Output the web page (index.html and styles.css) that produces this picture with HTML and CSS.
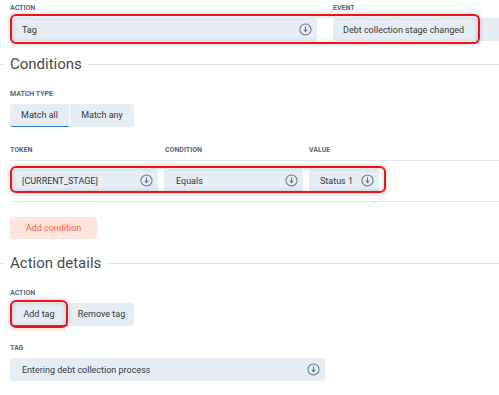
FILE: index.html
```html
<!DOCTYPE html>
<html lang="en">
<head>
  <meta charset="UTF-8">
  <title>Automation rule</title>
  <link rel="stylesheet" href="styles.css">
</head>
<body>
<div class="page">

  <!-- Trigger -->
  <div class="row trigger">
    <div class="col">
      <div class="label">Action</div>
      <div class="select w-action">
        <span>Tag</span>
        <svg class="caret" viewBox="0 0 14 14"><circle cx="7" cy="7" r="6"/><path d="M7 3.5V8.5"/><path class="head" d="M4.6 7.4H9.4L7 10.2Z"/></svg>
      </div>
    </div>
    <div class="col">
      <div class="label">Event</div>
      <div class="select w-event"><span>Debt collection stage changed</span></div>
    </div>
    <div class="mark mark-trigger"></div>
  </div>

  <!-- Conditions -->
  <div class="legend"><span class="legend-stub"></span><h2>Conditions</h2><span class="legend-line"></span></div>

  <div class="label">Match type</div>
  <div class="toggle">
    <div class="toggle-opt active w-all">Match all</div>
    <div class="toggle-opt w-any">Match any</div>
  </div>

  <div class="cond-table">
    <div class="cond-head">
      <div class="label">Token</div>
      <div class="label">Condition</div>
      <div class="label">Value</div>
    </div>
    <div class="cond-row">
      <div class="select">
        <span>[CURRENT_STAGE]</span>
        <svg class="caret" viewBox="0 0 14 14"><circle cx="7" cy="7" r="6"/><path d="M7 3.5V8.5"/><path class="head" d="M4.6 7.4H9.4L7 10.2Z"/></svg>
      </div>
      <div class="select">
        <span>Equals</span>
        <svg class="caret" viewBox="0 0 14 14"><circle cx="7" cy="7" r="6"/><path d="M7 3.5V8.5"/><path class="head" d="M4.6 7.4H9.4L7 10.2Z"/></svg>
      </div>
      <div class="select">
        <span>Status 1</span>
        <svg class="caret" viewBox="0 0 14 14"><circle cx="7" cy="7" r="6"/><path d="M7 3.5V8.5"/><path class="head" d="M4.6 7.4H9.4L7 10.2Z"/></svg>
      </div>
      <div class="mark mark-cond"></div>
    </div>
  </div>

  <button class="btn-add">Add condition</button>

  <!-- Action details -->
  <div class="legend"><span class="legend-stub"></span><h2>Action details</h2><span class="legend-line"></span></div>

  <div class="label">Action</div>
  <div class="toggle toggle-tag">
    <div class="toggle-opt active w-addtag">Add tag</div>
    <div class="toggle-opt w-remtag">Remove tag</div>
    <div class="mark mark-tag"></div>
  </div>

  <div class="label">Tag</div>
  <div class="select w-tag">
    <span>Entering debt collection process</span>
    <svg class="caret" viewBox="0 0 14 14"><circle cx="7" cy="7" r="6"/><path d="M7 3.5V8.5"/><path class="head" d="M4.6 7.4H9.4L7 10.2Z"/></svg>
  </div>

</div>
</body>
</html>
```

FILE: styles.css
```css
body {
  margin: 0;
  font-family: Roboto, "Noto Sans", sans-serif;
  color: #3d4650;
  background: #fff;
}
.page {
  padding: 3px 0 0 10px;
  width: 489px;
  height: 392px;
  overflow: hidden;
}
.label {
  font-size: 7px;
  line-height: 10px;
  font-weight: 700;
  text-transform: uppercase;
  color: #566a7e;
  margin-bottom: 5px;
}
.row {
  display: flex;
  position: relative;
}
.col {
  flex-shrink: 0;
}
.trigger .col + .col {
  margin-left: 16px;
}
.select {
  display: flex;
  align-items: center;
  justify-content: space-between;
  height: 23px;
  padding: 0 5px 0 12px;
  box-sizing: border-box;
  background: #e6edf5;
  border-radius: 3px;
  font-size: 9px;
  color: #33393f;
}
.caret {
  width: 13px;
  height: 13px;
  fill: none;
  stroke: #627689;
  stroke-width: 1.1;
}
.caret .head {
  fill: #627689;
  stroke: none;
}
.w-action { width: 307px; }
.w-event { width: 200px; padding-left: 10px; }
.w-tag { width: 315px; }

.mark {
  position: absolute;
  border: 2px solid #f0121b;
  border-radius: 6px;
  box-shadow: 0 0 5px rgba(0, 0, 0, 0.22), inset 0 0 5px rgba(0, 0, 0, 0.18);
  pointer-events: none;
}
.mark-trigger {
  left: 0;
  top: 11px;
  width: 466px;
  height: 26px;
}

.legend {
  display: flex;
  align-items: center;
  margin: 15px 0 0 -10px;
  height: 16px;
}
.legend-stub {
  width: 3px;
  border-top: 1px solid #d7e1eb;
}
.legend h2 {
  margin: 0 7px;
  font-size: 15px;
  font-weight: 400;
  line-height: 16px;
  color: #474b50;
}
.legend-line {
  flex: 1;
  border-top: 1px solid #d7e1eb;
}
.legend + .label {
  margin-top: 17px;
}

.toggle {
  display: flex;
  gap: 1px;
  position: relative;
  width: max-content;
}
.toggle-opt {
  height: 23px;
  line-height: 23px;
  box-sizing: border-box;
  text-align: center;
  background: #e6edf5;
  font-size: 9px;
  color: #33393f;
}
.toggle-opt:first-child { border-radius: 3px 0 0 3px; }
.toggle-opt:nth-child(2) { border-radius: 0 3px 3px 0; }
.toggle-opt.active {
  border-bottom: 1px solid #2c7cc0;
}
.w-all { width: 59px; }
.w-any { width: 64px; }
.w-addtag { width: 58px; }
.w-remtag { width: 65px; }
.mark-tag {
  left: 0;
  top: -3px;
  width: 54px;
  height: 24px;
}

.cond-table {
  margin-top: 18px;
}
.cond-head,
.cond-row {
  display: grid;
  grid-template-columns: 148px 139px 70px;
  column-gap: 6px;
}
.cond-head {
  padding-bottom: 5px;
  border-bottom: 1px solid #e1e8f0;
}
.cond-head .label {
  margin-bottom: 0;
}
.cond-head .label:nth-child(2) { padding-left: 1px; }
.cond-row {
  position: relative;
  padding: 8px 0 9px;
  border-bottom: 1px solid #e1e8f0;
}
.cond-row .select:nth-child(3) { padding-left: 11px; }
.mark-cond {
  left: 0;
  top: 5px;
  width: 372px;
  height: 23px;
}

.btn-add {
  display: block;
  margin: 15px 0 0;
  width: 87px;
  height: 22px;
  border: 0;
  border-radius: 3px;
  background: #fde4dc;
  color: #f3694c;
  font-family: inherit;
  font-size: 9px;
  padding: 0;
}
.btn-add + .legend {
  margin-top: 16px;
}
.legend + .label + .toggle-tag {
  margin-bottom: 17px;
}
```
